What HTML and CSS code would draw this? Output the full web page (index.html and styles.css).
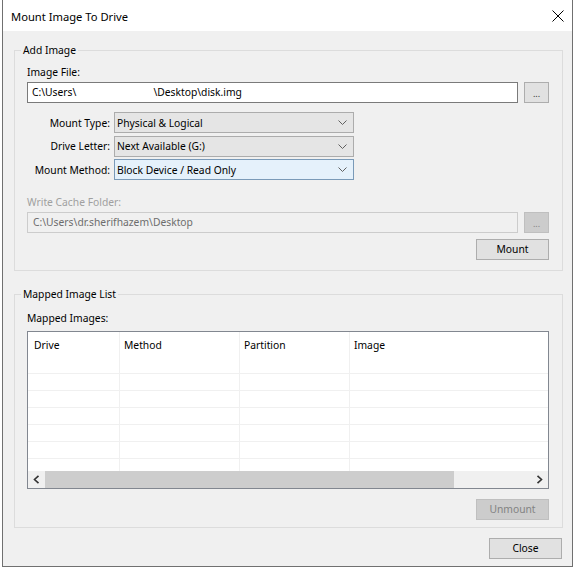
FILE: index.html
```html
<!DOCTYPE html>
<html>
<head>
<meta charset="utf-8">
<link rel="stylesheet" href="styles.css">
</head>
<body>
<div class="window">
  <div class="titlebar">
    <span class="title">Mount Image To Drive</span>
    <svg class="close-x" width="12" height="12" viewBox="0 0 12 12"><path d="M0.5 0.5 L11.5 11.5 M11.5 0.5 L0.5 11.5" stroke="#000" stroke-width="1" fill="none"/></svg>
  </div>
  <div class="client">
    <fieldset class="group group-add">
      <legend>Add Image</legend>
      <div class="label">Image File:</div>
      <div class="file-row">
        <div class="textbox">C:\Users\<span class="blank"></span>\Desktop\disk.img</div>
        <div class="btn btn-browse">...</div>
      </div>
      <div class="combos">
        <div class="clabel">Mount Type:</div>
        <div class="combo"><span>Physical &amp; Logical</span><svg width="9" height="5" viewBox="0 0 9 5"><path d="M0.5 0.5 L4.5 4.5 L8.5 0.5" stroke="#606060" fill="none"/></svg></div>
        <div class="clabel">Drive Letter:</div>
        <div class="combo"><span>Next Available (G:)</span><svg width="9" height="5" viewBox="0 0 9 5"><path d="M0.5 0.5 L4.5 4.5 L8.5 0.5" stroke="#606060" fill="none"/></svg></div>
        <div class="clabel">Mount Method:</div>
        <div class="combo focused"><span>Block Device / Read Only</span><svg width="9" height="5" viewBox="0 0 9 5"><path d="M0.5 0.5 L4.5 4.5 L8.5 0.5" stroke="#606060" fill="none"/></svg></div>
      </div>
      <div class="label disabled-label">Write Cache Folder:</div>
      <div class="file-row">
        <div class="textbox disabled">C:\Users\dr.sherifhazem\Desktop</div>
        <div class="btn btn-browse btn-disabled">...</div>
      </div>
      <div class="btn-row">
        <div class="btn btn-wide">Mount</div>
      </div>
    </fieldset>

    <fieldset class="group group-list">
      <legend>Mapped Image List</legend>
      <div class="label label-list">Mapped Images:</div>
      <div class="listview">
        <div class="lv-body">
          <div class="lv-head">
            <div class="c c1">Drive</div>
            <div class="c c2">Method</div>
            <div class="c c3">Partition</div>
            <div class="c c4">Image</div>
          </div>
          <div class="lv-row"><div class="c c1"></div><div class="c c2"></div><div class="c c3"></div><div class="c c4"></div></div>
          <div class="lv-row"><div class="c c1"></div><div class="c c2"></div><div class="c c3"></div><div class="c c4"></div></div>
          <div class="lv-row"><div class="c c1"></div><div class="c c2"></div><div class="c c3"></div><div class="c c4"></div></div>
          <div class="lv-row"><div class="c c1"></div><div class="c c2"></div><div class="c c3"></div><div class="c c4"></div></div>
          <div class="lv-row"><div class="c c1"></div><div class="c c2"></div><div class="c c3"></div><div class="c c4"></div></div>
          <div class="lv-row"><div class="c c1"></div><div class="c c2"></div><div class="c c3"></div><div class="c c4"></div></div>
          <div class="lv-row last"><div class="c c1"></div><div class="c c2"></div><div class="c c3"></div><div class="c c4"></div></div>
        </div>
        <div class="hscroll">
          <div class="arrow"><svg width="7" height="9" viewBox="0 0 7 9"><path d="M5.5 0.8 L1.5 4.5 L5.5 8.2" stroke="#333" stroke-width="1.6" fill="none"/></svg></div>
          <div class="track"><div class="thumb"></div></div>
          <div class="arrow"><svg width="7" height="9" viewBox="0 0 7 9"><path d="M1.5 0.8 L5.5 4.5 L1.5 8.2" stroke="#333" stroke-width="1.6" fill="none"/></svg></div>
        </div>
      </div>
      <div class="btn-row btn-row-list">
        <div class="btn btn-wide btn-disabled">Unmount</div>
      </div>
    </fieldset>

    <div class="footer">
      <div class="btn btn-close">Close</div>
    </div>
  </div>
</div>
</body>
</html>
```

FILE: styles.css
```css
html, body {
  margin: 0;
  padding: 0;
  background: #ffffff;
}
body {
  width: 576px;
  height: 569px;
  overflow: hidden;
  font-family: "Noto Sans", "Open Sans", sans-serif;
  font-size: 10.3px;
  color: #000;
}
.window {
  margin-left: 2px;
  width: 569px;
  height: 566px;
  border: 1px solid #707070;
  border-top: none;
  background: #f0f0f0;
  display: flex;
  flex-direction: column;
}
.titlebar {
  height: 31px;
  background: #ffffff;
  display: flex;
  align-items: center;
  justify-content: space-between;
  padding: 0 8px 0 8px;
  flex: none;
}
.title {
  font-size: 11.2px;
  margin-top: 1px;
}
.client {
  flex: 1;
  padding: 0 9px 0 11px;
  display: flex;
  flex-direction: column;
}
.group {
  margin: 11px 0 0 0;
  border: 1px solid #dcdcdc;
  padding: 0 13px 10px 12px;
  min-width: 0;
}
.group legend {
  padding: 0 2px;
  margin-left: -6px;
  line-height: 16px;
}
.group-list {
  margin-top: 15px;
  padding-bottom: 7px;
}
.label {
  line-height: 16px;
  margin-top: 6px;
  height: 16px;
}
.label-list {
  margin-top: 8px;
}
.disabled-label {
  color: #a0a0a0;
  margin-top: 14px;
}
.file-row {
  display: flex;
  gap: 6px;
  margin-top: 2px;
}
.textbox {
  flex: 1;
  height: 19px;
  border: 1px solid #7a7a7a;
  background: #fff;
  line-height: 19px;
  padding-left: 4px;
  white-space: nowrap;
}
.textbox .blank {
  display: inline-block;
  width: 77px;
}
.textbox.disabled {
  border-color: #cccccc;
  background: #f0f0f0;
  color: #6d6d6d;
  padding-left: 5px;
}
.btn {
  background: #e1e1e1;
  border: 1px solid #adadad;
  height: 19px;
  line-height: 19px;
  text-align: center;
  box-sizing: content-box;
}
.btn-browse {
  width: 23px;
  font-size: 9px;
  line-height: 22px;
  color: #333;
}
.btn-disabled {
  background: #cccccc;
  border-color: #bfbfbf;
  color: #838383;
}
.combos {
  display: grid;
  grid-template-columns: 83px 240px;
  column-gap: 4px;
  row-gap: 2.5px;
  margin-top: 9px;
  align-items: center;
}
.clabel {
  text-align: right;
  white-space: nowrap;
}
.combo {
  height: 19px;
  border: 1px solid #acacac;
  background: #e5e5e5;
  display: flex;
  align-items: center;
  justify-content: space-between;
  padding: 0 6px 0 2px;
}
.combo.focused {
  background: #e5f1fb;
  border-color: #7a9ab8;
}
.btn-row {
  display: flex;
  justify-content: flex-end;
  margin-top: 6px;
}
.btn-row-list {
  margin-top: 10px;
}
.btn-wide {
  width: 71px;
}
.listview {
  margin-top: 5px;
  border: 1px solid #828790;
  background: #ffffff;
  height: 156px;
  display: flex;
  flex-direction: column;
}
.lv-body {
  flex: 1;
  overflow: hidden;
}
.lv-head, .lv-row {
  display: flex;
}
.lv-head {
  height: 25px;
}
.lv-head .c {
  padding-left: 4px;
  padding-top: 2px;
  line-height: 22px;
}
.lv-head .c1 {
  padding-left: 6px;
}
.lv-row {
  height: 16px;
  border-bottom: 1px solid #f0f0f0;
}
.lv-row.last {
  border-bottom: none;
}
.c {
  border-right: 1px solid #f0f0f0;
  box-sizing: border-box;
  flex: none;
}
.c1 { width: 92px; }
.c2 { width: 120px; }
.c3 { width: 110px; }
.c4 { flex: 1; border-right: none; }
.hscroll {
  height: 17px;
  background: #f0f0f0;
  display: flex;
  flex: none;
}
.arrow {
  width: 17px;
  display: flex;
  align-items: center;
  justify-content: center;
}
.track {
  flex: 1;
  display: flex;
  align-items: stretch;
}
.thumb {
  width: 409px;
  background: #cdcdcd;
}
.footer {
  display: flex;
  justify-content: flex-end;
  margin-top: 10px;
  padding-right: 1px;
}
.btn-close {
  width: 71px;
}
```
